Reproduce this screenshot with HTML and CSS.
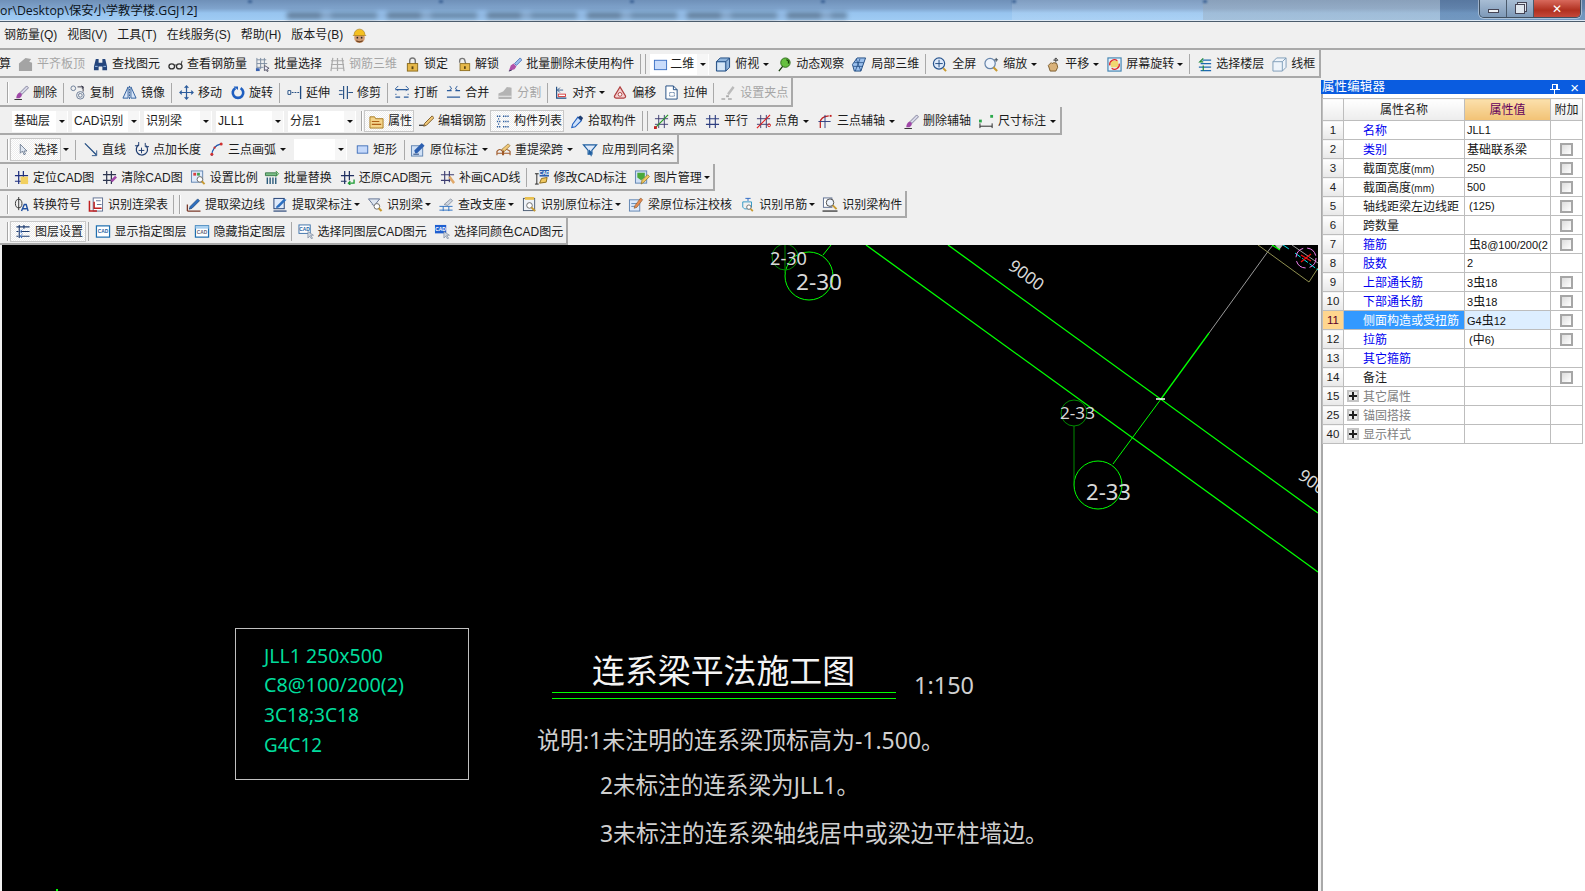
FILE: index.html
```html
<!DOCTYPE html>
<html lang="zh-CN">
<head>
<meta charset="utf-8">
<title>保安小学教学楼.GGJ12</title>
<link rel="stylesheet" href="styles.css">
</head>
<body>
<svg class="defs" aria-hidden="true">
<symbol id="i-lev" viewBox="0 0 16 16"><path d="M1 7l7-6 6 1-2 3 3 1v9H1z" fill="#a4a4a4"/></symbol>
<symbol id="i-find" viewBox="0 0 16 16"><path d="M3 2h3v4h4V2h3l2 8v4h-5v-4H6v4H1v-4z" fill="#24457c"/><path d="M2 10h3M11 10h3" stroke="#9cc0ec"/></symbol>
<symbol id="i-look" viewBox="0 0 16 16"><ellipse cx="4" cy="10" rx="3" ry="2.6" fill="none" stroke="#333" stroke-width="1.4"/><ellipse cx="12" cy="10" rx="3" ry="2.6" fill="none" stroke="#333" stroke-width="1.4"/><path d="M7 9q1-1 2 0M14 8l1-4" stroke="#333" fill="none"/></symbol>
<symbol id="i-batch" viewBox="0 0 16 16"><path d="M2 1v14M6 1v12M10 1v8M2 3h10M2 7h11M2 11h7" stroke="#7c8ca0"/><rect x="1" y="12" width="4" height="3" fill="#3a62b0"/><path d="M10 9l5 3-2 1 1 2-1 .5-1-2-2 1z" fill="#eef" stroke="#556"/></symbol>
<symbol id="i-r3d" viewBox="0 0 16 16"><path d="M1 4h14M1 8h14M1 12h14M3 1l-2 14M8 1v14M13 1l2 14" stroke="#aaa" stroke-width="1.3" fill="none"/></symbol>
<symbol id="i-lock" viewBox="0 0 16 16"><path d="M5 8V4a3 3 0 016 0v4" fill="none" stroke="#777" stroke-width="1.5"/><rect x="2.500" y="7" width="11" height="8" fill="#e6b84a" stroke="#8a6a1c"/><rect x="7" y="10" width="2" height="3" fill="#5a4410"/></symbol>
<symbol id="i-unlock" viewBox="0 0 16 16"><path d="M3 6V4a3 3 0 016 0l1 3" fill="none" stroke="#777" stroke-width="1.5"/><rect x="3.500" y="7" width="11" height="8" fill="#e6b84a" stroke="#8a6a1c"/><rect x="8" y="10" width="2" height="3" fill="#5a4410"/></symbol>
<symbol id="i-brush" viewBox="0 0 16 16"><path d="M1 15.500h8" stroke="#222"/><path d="M7 8l7-7 2 2-7 7z" fill="#d8d8e8" stroke="#6a6a88" stroke-width=".8"/><path d="M3 14c0-3 2-6 4-6l2 2c0 3-3 5-6 4z" fill="#a048a8"/></symbol>
<symbol id="i-delbrush" viewBox="0 0 16 16"><path d="M8 7l6-6 2 2-6 6z" fill="#9cc0ec" stroke="#3a62b0" stroke-width=".8"/><path d="M2 15l2-6 3-2 3 3-2 3z" fill="#b050a8"/><path d="M2 15l3-1" stroke="#335"/></symbol>
<symbol id="i-2d" viewBox="0 0 16 16"><rect x="1.500" y="3.500" width="13" height="10" fill="#c9dcfb" stroke="#3c70c4"/></symbol>
<symbol id="i-top" viewBox="0 0 16 16"><path d="M1 5l4-4h10v10l-4 4H1z" fill="#8fb4dc" stroke="#1e4a80"/><path d="M1 5h10v10M11 5l4-4" fill="none" stroke="#1e4a80"/><rect x="2" y="6" width="8" height="8" fill="#d6e6f6"/></symbol>
<symbol id="i-orbit" viewBox="0 0 16 16"><circle cx="9" cy="6" r="5" fill="#66c040" stroke="#2c6a18"/><path d="M6 10l-4 5M10 3c2 0 3 2 2 4" stroke="#143c08" fill="none" stroke-width="1.4"/></symbol>
<symbol id="i-l3d" viewBox="0 0 16 16"><path d="M1 8l5-7h9l-5 14H3z" fill="#9cc0ec" stroke="#1e4a80"/><path d="M5 2l5 13M9 2l-5 13M3 6h10M2 10h10" stroke="#1e4a80" stroke-width=".8"/></symbol>
<symbol id="i-full" viewBox="0 0 16 16"><circle cx="7.500" cy="7" r="6" fill="#dfeafa" stroke="#28558e" stroke-width="1.3"/><path d="M7.500 3v8M3.500 7h8" stroke="#1e4a80"/><path d="M12 12l3 3" stroke="#c89a30" stroke-width="2"/></symbol>
<symbol id="i-zoom" viewBox="0 0 16 16"><circle cx="6.500" cy="7" r="5.500" fill="#eef4fc" stroke="#6684aa" stroke-width="1.3"/><path d="M10 11l4 4" stroke="#c89a30" stroke-width="2.200"/><path d="M13 1v4M11 3h4" stroke="#345"/></symbol>
<symbol id="i-pan" viewBox="0 0 16 16"><path d="M3 9l3-3 1 1 2-1 3 1 1 4-2 4H5z" fill="#d9b27a" stroke="#7a5a2a"/><path d="M11 1v5M9 3l2-2 2 2M8.500 3.500h5" stroke="#444" fill="none"/></symbol>
<symbol id="i-scr" viewBox="0 0 16 16"><rect x="1" y="1" width="14" height="14" fill="#e8f2fb" stroke="#3c80b0" stroke-width="1.200"/><rect x="4" y="4" width="8" height="7" fill="#f0d870"/><path d="M3 9a5 5 0 018-5M13 7a5 5 0 01-8 5" fill="none" stroke="#e02a2a" stroke-width="1.400"/></symbol>
<symbol id="i-floor" viewBox="0 0 16 16"><path d="M5 3h10M3 7h12M1 11h14M3 15h12" stroke="#1d6ab0" stroke-width="1.600"/><path d="M6 1L2 5h4M6 9v6" stroke="#1f8a3a" stroke-width="1.400" fill="none"/></symbol>
<symbol id="i-wire" viewBox="0 0 16 16"><path d="M1 5l4-4h10v10l-4 4H1zM1 5h10v10M11 5l4-4" fill="#eef4fa" stroke="#7d9cb8"/></symbol>
<symbol id="i-copy" viewBox="0 0 16 16"><circle cx="3.500" cy="3.500" r="2.500" fill="none" stroke="#6a7c96"/><circle cx="11" cy="11" r="4" fill="none" stroke="#6a7c96"/><circle cx="11" cy="11" r="2" fill="none" stroke="#6a7c96"/><path d="M8 2l6 0M14 2v5M12 1l2 1-1 2" stroke="#334" fill="none"/></symbol>
<symbol id="i-mirror" viewBox="0 0 16 16"><path d="M6.500 2v12H1zM9.500 2v12H15z" fill="#d8e6f8" stroke="#2c5c9c"/><path d="M8 1v14" stroke="#2c5c9c" stroke-dasharray="2 1"/></symbol>
<symbol id="i-move" viewBox="0 0 16 16"><path d="M8 1v14M1 8h14M6 3l2-2 2 2M6 13l2 2 2-2M3 6L1 8l2 2M13 6l2 2-2 2" fill="none" stroke="#2c5c9c" stroke-width="1.300"/></symbol>
<symbol id="i-rot" viewBox="0 0 16 16"><path d="M5 3a6 6 0 106 0" fill="none" stroke="#1f5fc0" stroke-width="3"/><path d="M3 1h5v4z" fill="#1f5fc0"/></symbol>
<symbol id="i-ext" viewBox="0 0 16 16"><path d="M14.500 1v14" stroke="#1e4a80" stroke-width="1.400"/><path d="M1 6h3v4H1z" fill="#fff" stroke="#1e4a80"/><path d="M5 8h8" stroke="#1e4a80" stroke-dasharray="2 1"/></symbol>
<symbol id="i-trim" viewBox="0 0 16 16"><path d="M6 1v14M10 1v14" stroke="#1e4a80" stroke-width="1.200"/><path d="M1 6h4M1 10h4M11 8h5" stroke="#1e4a80"/></symbol>
<symbol id="i-brk" viewBox="0 0 16 16"><path d="M1 5h14M1 13h5M10 13h5M1 10h1M14 10h1" stroke="#2c5c9c" stroke-width="1.300"/><path d="M4 1L1 4l3 2M12 1l3 3-3 2" fill="none" stroke="#2c5c9c"/></symbol>
<symbol id="i-merge" viewBox="0 0 16 16"><path d="M1 6h5M10 6h5M1 13h14" stroke="#2c5c9c" stroke-width="1.300"/><path d="M4 1l2 3-2 1M12 1l-2 3 2 1" fill="none" stroke="#2c5c9c"/></symbol>
<symbol id="i-split" viewBox="0 0 16 16"><path d="M1 15V9l5-2 4-5 5 1v12z" fill="#b4b4b4"/><path d="M1 12h14" stroke="#eee"/></symbol>
<symbol id="i-align" viewBox="0 0 16 16"><path d="M2 1v14h12" fill="none" stroke="#1e4a80" stroke-width="1.400"/><rect x="4" y="10" width="9" height="3" fill="#fff" stroke="#d02020"/><path d="M6 2l-3 3 3 3M3 5h7" fill="none" stroke="#1e4a80"/></symbol>
<symbol id="i-off" viewBox="0 0 16 16"><path d="M8 2l6 10q0 2-2 2H4q-2 0-2-2z" fill="#f4d0d0" stroke="#b04040" stroke-width="1.300"/><circle cx="8" cy="10" r="2" fill="#fff" stroke="#b04040"/></symbol>
<symbol id="i-str" viewBox="0 0 16 16"><path d="M2 1h8l4 4v10H2z" fill="#fff" stroke="#1e4a80"/><path d="M10 1v4h4" fill="none" stroke="#1e4a80"/><path d="M6 8h5v4H6z" fill="none" stroke="#1e4a80" stroke-dasharray="1 1"/></symbol>
<symbol id="i-grip" viewBox="0 0 16 16"><path d="M7 9l6-8 2 2-6 8z" fill="#bbb"/><path d="M1 15h4M8 15h4" stroke="#aaa" stroke-width="1.500"/><rect x="6" y="11" width="3" height="2" fill="#aaa"/></symbol>
<symbol id="i-attr" viewBox="0 0 16 16"><path d="M1 3h5l1 2h8v10H1z" fill="#f4d48a" stroke="#a87a20"/><path d="M3 8h8M3 11h10" stroke="#b06018" stroke-width="1.200"/></symbol>
<symbol id="i-edit" viewBox="0 0 16 16"><path d="M0 12h7" stroke="#222" stroke-width="1.200"/><path d="M6 10l8-8 2 2-8 8-3 1z" fill="#f0c878" stroke="#7a5a2a"/></symbol>
<symbol id="i-list" viewBox="0 0 16 16"><path d="M1 2h4M1 8h4M1 14h4M8 2h7M8 8h7M8 14h7" stroke="#2c5c9c" stroke-width="1.500" stroke-dasharray="1.500 1"/><path d="M3 4v2M3 10v2" stroke="#2c5c9c"/></symbol>
<symbol id="i-pick" viewBox="0 0 16 16"><path d="M9 3l4 4-7 7-4 1 1-4z" fill="#cfe2fa" stroke="#1f5fc0" stroke-width="1.200"/><path d="M9 3l3-2 3 3-2 3z" fill="#1e3c70"/></symbol>
<symbol id="i-2pt" viewBox="0 0 16 16"><path d="M5 1v14M11 1v14M1 5h14M1 11h14" stroke="#3c3c70"/><path d="M1 15L15 1" stroke="#2a9a2a" stroke-width="1.300"/><rect x="0" y="13" width="3" height="3" fill="#c02020"/></symbol>
<symbol id="i-par" viewBox="0 0 16 16"><path d="M5 1v14M11 1v14M1 5h14M1 11h14" stroke="#2e3e80" stroke-width="1.200"/></symbol>
<symbol id="i-ang" viewBox="0 0 16 16"><path d="M5 1v14M11 1v14M1 5h14M1 11h14" stroke="#3c3c70"/><path d="M1 15L15 1" stroke="#e02020" stroke-width="1.300"/><circle cx="14" cy="12" r="1.500" fill="none" stroke="#e02020"/></symbol>
<symbol id="i-3ax" viewBox="0 0 16 16"><path d="M3 15V9q0-6 9-7" fill="none" stroke="#c02020" stroke-width="1.300"/><path d="M8 1v14M1 8h13" stroke="#2e3e80"/><rect x="13" y="1" width="2" height="2" fill="#c02020"/></symbol>
<symbol id="i-dim" viewBox="0 0 16 16"><path d="M1 10v5M14 10v5M1 13h13" stroke="#222"/><rect x="0" y="6" width="3" height="3" fill="#2aa84a"/><rect x="12" y="1" width="3" height="3" fill="#2aa84a"/></symbol>
<symbol id="i-sel" viewBox="0 0 16 16"><path d="M3 1v12l3-3 2 5 2-1-2-4h4z" fill="#dfe7f2" stroke="#5a6a80"/></symbol>
<symbol id="i-line" viewBox="0 0 16 16"><path d="M1 1l13 13" stroke="#1e4a80" stroke-width="1.400"/><path d="M14.500 9v6H9" fill="none" stroke="#1e4a80"/></symbol>
<symbol id="i-ptl" viewBox="0 0 16 16"><path d="M5 3a6 6 0 108 1" fill="none" stroke="#1e3c70" stroke-width="1.300"/><path d="M8 6v6M5 9h6" stroke="#1e3c70"/><path d="M5 0v4H1M12 1v4h4" fill="none" stroke="#1e3c70"/></symbol>
<symbol id="i-arc" viewBox="0 0 16 16"><path d="M3 15Q3 4 13 2" fill="none" stroke="#1e5ab0" stroke-width="1.300"/><circle cx="3" cy="13" r="1.600" fill="#d03030"/><circle cx="13" cy="2" r="1.600" fill="#d03030"/><circle cx="6" cy="6" r="1.200" fill="#d03030"/></symbol>
<symbol id="i-rect" viewBox="0 0 16 16"><rect x="1.500" y="3.500" width="13" height="9" fill="#c4d8fa" stroke="#2c5fb0"/></symbol>
<symbol id="i-org" viewBox="0 0 16 16"><rect x="1" y="4" width="12" height="11" fill="#cfe0f6" stroke="#5f83b0"/><path d="M5 12l-1-3 8-8 3 3-8 8z" fill="#2c5fb0"/><path d="M3 13h6" stroke="#1e3c70"/></symbol>
<symbol id="i-resp" viewBox="0 0 16 16"><path d="M1 14v-4q3-4 6 0v4M8 14v-4q3-4 7 0v4M1 12h14" fill="none" stroke="#a05a2a" stroke-width="1.200"/><path d="M6 8l7-6 2 2-6 6z" fill="#f0c878" stroke="#8a6a2a" stroke-width=".7"/></symbol>
<symbol id="i-app" viewBox="0 0 16 16"><path d="M1 3h14l-5 6v4H6V9z" fill="#dfeafa" stroke="#1f5fa0" stroke-width="1.300"/><path d="M7 8l4 4-2 0 1 3-1 .5-1-3-1.500 1z" fill="#1f5fa0"/></symbol>
<symbol id="i-loc" viewBox="0 0 16 16"><path d="M5 1v14M10 1v14M1 6h14M1 12h14" stroke="#1f2f80" stroke-width="1.300"/><rect x="7" y="7" width="8" height="8" fill="#f2d060"/></symbol>
<symbol id="i-clr" viewBox="0 0 16 16"><path d="M5 1v14M10 1v14M1 5h14M1 11h9" stroke="#2e3650" stroke-width="1.300"/><path d="M9 11l5-5 2 2-5 5z" fill="#a048a8"/></symbol>
<symbol id="i-scale" viewBox="0 0 16 16"><rect x="1" y="1" width="12" height="12" fill="#dfeafa" stroke="#5f83b0"/><rect x="3" y="3" width="3" height="3" fill="#d84040"/><rect x="7" y="3" width="3" height="3" fill="#40a050"/><circle cx="10" cy="10" r="3" fill="#fff" stroke="#666"/><path d="M12 12l3 3" stroke="#c89a30" stroke-width="2"/></symbol>
<symbol id="i-repl" viewBox="0 0 16 16"><path d="M1 3h12v3H1z" fill="#7cc088" stroke="#3a7a4a"/><path d="M3 8v7M6 8v7M9 8v7M12 8v7" stroke="#2c5c7c" stroke-width="1.500"/><path d="M12 1l3 3-3 3" fill="none" stroke="#2a9a2a"/></symbol>
<symbol id="i-rest" viewBox="0 0 16 16"><path d="M5 1v14M10 1v10M1 6h14M1 12h6" stroke="#1f2f60" stroke-width="1.300"/><path d="M15 10v4H9M11 12l-2 2 2 2" fill="none" stroke="#1a9a30" stroke-width="1.400"/></symbol>
<symbol id="i-patch" viewBox="0 0 16 16"><path d="M5 1v14M10 1v12M1 5h14M1 11h10" stroke="#3c3c70" stroke-width="1.200"/><path d="M9 8l2-2 5 7-2 2z" fill="#e0a868"/></symbol>
<symbol id="i-pic" viewBox="0 0 16 16"><rect x="1" y="1" width="12" height="13" fill="#cfe0f6" stroke="#5f83b0"/><path d="M3 3h8v5l-4 3-4-3z" fill="#4aa83a"/><path d="M7 15l1-4 6-6 2 2-6 6z" fill="#f0c860" stroke="#8a6a1c" stroke-width=".7"/></symbol>
<symbol id="i-conv" viewBox="0 0 16 16"><ellipse cx="5" cy="7" rx="3.500" ry="4.500" fill="none" stroke="#333"/><path d="M5 0v14" stroke="#333"/><path d="M8 15l3-7h2l2 7M9.500 12.500h4" fill="none" stroke="#1f4fa0" stroke-width="1.500"/></symbol>
<symbol id="i-ctab" viewBox="0 0 16 16"><rect x="5" y="1" width="10" height="14" fill="#fff" stroke="#5f6f90"/><path d="M1 4v11h8M6 5v7h8" fill="none" stroke="#c02020" stroke-width="1.600"/><path d="M8 4h5M9 8h5" stroke="#5f6f90"/></symbol>
<symbol id="i-xedge" viewBox="0 0 16 16"><path d="M2 15V8M2 15h14" stroke="#7a3a2a" stroke-width="1.400"/><path d="M5 10l8-8 2 2-8 8-3 1z" fill="#2c6fc0" stroke="#143c70" stroke-width=".7"/></symbol>
<symbol id="i-xmark" viewBox="0 0 16 16"><rect x="1.500" y="1.500" width="11" height="11" fill="#dfeafa" stroke="#1e3c70"/><path d="M1 15h14" stroke="#1e3c70" stroke-width="1.200"/><path d="M4 10l8-8 3 1-8 8-3 1z" fill="#2c6fc0"/></symbol>
<symbol id="i-rec" viewBox="0 0 16 16"><path d="M1 2h12l-4 5v3L5 8V7z" fill="#dfe6f0" stroke="#5f6f90"/><circle cx="10" cy="10" r="3" fill="#fff" stroke="#666"/><path d="M12 12l3 3" stroke="#c89a30" stroke-width="2.200"/></symbol>
<symbol id="i-sup" viewBox="0 0 16 16"><path d="M1 10h14M1 14h14M5 10v5M11 10v5" stroke="#2c6fc0"/><path d="M6 8l7-6 2 2-5 5z" fill="#cfd6e0" stroke="#8a94a4"/></symbol>
<symbol id="i-orig" viewBox="0 0 16 16"><rect x="1.500" y="1.500" width="12" height="13" fill="#eef2f8" stroke="#4a5a70"/><rect x="3" y="0" width="10" height="3" fill="#e8c050"/><circle cx="8" cy="9" r="3" fill="#fff" stroke="#666"/><path d="M10 11l4 4" stroke="#c89a30" stroke-width="2"/></symbol>
<symbol id="i-chk" viewBox="0 0 16 16"><rect x="1" y="3" width="11" height="12" fill="#dfeafa" stroke="#5f83b0"/><path d="M3 7h6M3 10h5" stroke="#5f83b0"/><path d="M6 12l1-3 6-8 2 2-6 8z" fill="#e88a50" stroke="#8a5a2a" stroke-width=".7"/></symbol>
<symbol id="i-hang" viewBox="0 0 16 16"><path d="M5 1h6M8 1v3" stroke="#1f5fc0"/><path d="M2 5h10v6l-2 2H4l-2-2z" fill="none" stroke="#1f8fc0"/><circle cx="9" cy="11" r="2.500" fill="#fff" stroke="#666"/><path d="M11 13l2.500 2.500" stroke="#c89a30" stroke-width="2"/></symbol>
<symbol id="i-bcomp" viewBox="0 0 16 16"><rect x="1" y="1" width="9" height="10" fill="#fff" stroke="#5f6f90"/><circle cx="8" cy="6" r="4" fill="#eef4fc" stroke="#444"/><path d="M11 9l4 4" stroke="#c89a30" stroke-width="2"/><path d="M0 15h16" stroke="#444" stroke-width="1.500"/></symbol>
<symbol id="i-layer" viewBox="0 0 16 16"><path d="M1 3h14M6 8h9M6 13h9M1 8h2M1 13h2M4 1v14M9 1v4" stroke="#1e3c70" stroke-width="1.200"/><path d="M7 6L5 8l2 2M7 11l-2 2 2 2" fill="none" stroke="#1f5fc0"/></symbol>
<symbol id="i-hat" viewBox="0 0 16 16"><circle cx="8" cy="10" r="5" fill="#d09a70"/><circle cx="6" cy="10" r=".8" fill="#222"/><circle cx="10" cy="10" r=".8" fill="#222"/><path d="M3 7a5 5 0 0110 0l1 1H2z" fill="#f4c020" stroke="#a87a10" stroke-width=".6"/><path d="M5 13q3 2 6 0" stroke="#6a4020" fill="none"/></symbol>
</svg>

<header class="titlebar">
  <span class="doc">or\Desktop\保安小学教学楼.GGJ12]</span>
  <div class="winbtns">
    <span class="wb"><i class="wmin"></i></span>
    <span class="wb"><i class="wmax"></i></span>
    <span class="wb wclose">✕</span>
  </div>
</header>

<nav class="menu">
  <span>钢筋量(Q)</span><span>视图(V)</span><span>工具(T)</span><span>在线服务(S)</span><span>帮助(H)</span><span>版本号(B)</span>
  <svg class="hat"><use href="#i-hat"/></svg>
</nav>

<div class="work">
<div class="left">
  <div class="tb r1">
    <span class="t first">算</span>
    <span class="t off s1"><svg class="ic"><use href="#i-lev"/></svg>平齐板顶</span>
    <span class="t"><svg class="ic"><use href="#i-find"/></svg>查找图元</span>
    <span class="t"><svg class="ic"><use href="#i-look"/></svg>查看钢筋量</span>
    <span class="t"><svg class="ic"><use href="#i-batch"/></svg>批量选择</span>
    <span class="t off"><svg class="ic"><use href="#i-r3d"/></svg>钢筋三维</span>
    <span class="t"><svg class="ic"><use href="#i-lock"/></svg>锁定</span>
    <span class="t a1"><svg class="ic w14"><use href="#i-unlock"/></svg>解锁</span>
    <span class="t"><svg class="ic"><use href="#i-delbrush"/></svg>批量删除未使用构件</span>
    <i class="grip2"></i>
    <span class="pick"><svg class="ic w15m"><use href="#i-2d"/></svg>二维<b class="ddcell"><i class="dd0"></i></b></span>
    <span class="t s2"><svg class="ic w16"><use href="#i-top"/></svg>俯视<i class="dd"></i></span>
    <span class="t"><svg class="ic"><use href="#i-orbit"/></svg>动态观察</span>
    <span class="t s1"><svg class="ic w16"><use href="#i-l3d"/></svg>局部三维</span>
    <i class="sep"></i>
    <span class="t"><svg class="ic w17"><use href="#i-full"/></svg>全屏</span>
    <span class="t"><svg class="ic"><use href="#i-zoom"/></svg>缩放<i class="dd"></i></span>
    <span class="t"><svg class="ic w16"><use href="#i-pan"/></svg>平移<i class="dd"></i></span>
    <span class="t"><svg class="ic"><use href="#i-scr"/></svg>屏幕旋转<i class="dd d4"></i></span>
    <i class="sep"></i>
    <span class="t a3"><svg class="ic w14"><use href="#i-floor"/></svg>选择楼层</span>
    <span class="t"><svg class="ic"><use href="#i-wire"/></svg>线框</span>
  </div>

  <div class="tb r2">
    <i class="grip g13"></i>
    <span class="t"><svg class="ic w16"><use href="#i-brush"/></svg>删除</span>
    <i class="sep"></i>
    <span class="t"><svg class="ic w17"><use href="#i-copy"/></svg>复制</span>
    <span class="t"><svg class="ic"><use href="#i-mirror"/></svg>镜像</span>
    <i class="sep"></i>
    <span class="t a2"><svg class="ic"><use href="#i-move"/></svg>移动</span>
    <span class="t a1"><svg class="ic w14"><use href="#i-rot"/></svg>旋转</span>
    <i class="sep"></i>
    <span class="t a2"><svg class="ic"><use href="#i-ext"/></svg>延伸</span>
    <span class="t"><svg class="ic"><use href="#i-trim"/></svg>修剪</span>
    <i class="sep"></i>
    <span class="t a1"><svg class="ic w16"><use href="#i-brk"/></svg>打断</span>
    <span class="t"><svg class="ic"><use href="#i-merge"/></svg>合并</span>
    <span class="t off"><svg class="ic w16"><use href="#i-split"/></svg>分割</span>
    <i class="sep"></i>
    <span class="t a2"><svg class="ic w13"><use href="#i-align"/></svg>对齐<i class="dd d4"></i></span>
    <span class="t s1"><svg class="ic w16"><use href="#i-off"/></svg>偏移</span>
    <span class="t"><svg class="ic"><use href="#i-str"/></svg>拉伸</span>
    <i class="sep"></i>
    <span class="t off a1"><svg class="ic w16"><use href="#i-grip"/></svg>设置夹点</span>
  </div>

  <div class="tb r3">
    <div class="combos">
      <span class="combo c-first">基础层<b class="ddcell"><i class="dd0"></i></b></span>
      <span class="combo">CAD识别<b class="ddcell"><i class="dd0"></i></b></span>
      <span class="combo">识别梁<b class="ddcell"><i class="dd0"></i></b></span>
      <span class="combo">JLL1<b class="ddcell"><i class="dd0"></i></b></span>
      <span class="combo">分层1<b class="ddcell"><i class="dd0"></i></b></span>
    </div>
    <i class="grip g-tight"></i>
    <span class="t btn b-attr"><svg class="ic"><use href="#i-attr"/></svg>属性</span>
    <span class="t s3"><svg class="ic"><use href="#i-edit"/></svg>编辑钢筋</span>
    <span class="t btn b-list s4"><svg class="ic w14"><use href="#i-list"/></svg>构件列表</span>
    <span class="t s2"><svg class="ic w14"><use href="#i-pick"/></svg>拾取构件</span>
    <i class="grip2"></i>
    <span class="t a2"><svg class="ic"><use href="#i-2pt"/></svg>两点</span>
    <span class="t"><svg class="ic"><use href="#i-par"/></svg>平行</span>
    <span class="t"><svg class="ic"><use href="#i-ang"/></svg>点角<i class="dd"></i></span>
    <span class="t"><svg class="ic w16"><use href="#i-3ax"/></svg>三点辅轴<i class="dd"></i></span>
    <span class="t"><svg class="ic w16"><use href="#i-brush"/></svg>删除辅轴</span>
    <span class="t"><svg class="ic"><use href="#i-dim"/></svg>尺寸标注<i class="dd"></i></span>
  </div>

  <div class="tb r4">
    <i class="grip g-tight2"></i>
    <span class="t btn b-sel"><svg class="ic w12"><use href="#i-sel"/></svg>选择</span>
    <i class="dd dx"></i>
    <i class="sep"></i>
    <span class="t a3"><svg class="ic w14"><use href="#i-line"/></svg>直线</span>
    <span class="t"><svg class="ic"><use href="#i-ptl"/></svg>点加长度</span>
    <span class="t"><svg class="ic"><use href="#i-arc"/></svg>三点画弧<i class="dd"></i></span>
    <span class="combo c-blank"><b class="ddcell"><i class="dd0"></i></b></span>
    <span class="t a1"><svg class="ic w13"><use href="#i-rect"/></svg>矩形</span>
    <i class="sep a1"></i>
    <span class="t"><svg class="ic w16"><use href="#i-org"/></svg>原位标注<i class="dd"></i></span>
    <span class="t"><svg class="ic"><use href="#i-resp"/></svg>重提梁跨<i class="dd"></i></span>
    <span class="t a1"><svg class="ic w16"><use href="#i-app"/></svg>应用到同名梁</span>
  </div>

  <div class="tb r5">
    <i class="grip g14"></i>
    <span class="t"><svg class="ic"><use href="#i-loc"/></svg>定位CAD图</span>
    <span class="t"><svg class="ic"><use href="#i-clr"/></svg>清除CAD图</span>
    <span class="t s1"><svg class="ic w16"><use href="#i-scale"/></svg>设置比例</span>
    <span class="t s2"><svg class="ic w16"><use href="#i-repl"/></svg>批量替换</span>
    <span class="t"><svg class="ic"><use href="#i-rest"/></svg>还原CAD图元</span>
    <span class="t"><svg class="ic"><use href="#i-patch"/></svg>补画CAD线</span>
    <i class="sep"></i>
    <span class="t a2"><svg class="ic" viewBox="0 0 16 16"><rect x="6" y="0" width="10" height="7" fill="#2c5fb0"/><text x="11" y="5.500" class="ict wt">CAD</text><path d="M1 4h4M3 4v11M1 15h4" stroke="#222"/><path d="M6 14l2-5 6-1-1 5z" fill="#f0c860" stroke="#8a6a1c"/></svg>修改CAD标注</span>
    <span class="t s1"><svg class="ic w16"><use href="#i-pic"/></svg>图片管理<i class="dd d3"></i></span>
  </div>

  <div class="tb r6">
    <i class="grip g14"></i>
    <span class="t"><svg class="ic"><use href="#i-conv"/></svg>转换符号</span>
    <span class="t s1"><svg class="ic w16"><use href="#i-ctab"/></svg>识别连梁表</span>
    <i class="sep s1"></i>
    <i class="grip g-next"></i>
    <span class="t"><svg class="ic w16"><use href="#i-xedge"/></svg>提取梁边线</span>
    <span class="t s1"><svg class="ic w16"><use href="#i-xmark"/></svg>提取梁标注<i class="dd d3"></i></span>
    <span class="t s1"><svg class="ic w16"><use href="#i-rec"/></svg>识别梁<i class="dd d3"></i></span>
    <span class="t s1"><svg class="ic w16"><use href="#i-sup"/></svg>查改支座<i class="dd d3"></i></span>
    <span class="t"><svg class="ic"><use href="#i-orig"/></svg>识别原位标注<i class="dd d3"></i></span>
    <span class="t s1"><svg class="ic w16"><use href="#i-chk"/></svg>梁原位标注校核</span>
    <span class="t a1"><svg class="ic w14"><use href="#i-hang"/></svg>识别吊筋<i class="dd d3"></i></span>
    <span class="t s1"><svg class="ic w16"><use href="#i-bcomp"/></svg>识别梁构件</span>
  </div>

  <div class="tb r7">
    <i class="grip g-tight2"></i>
    <span class="t btn b-lay"><svg class="ic w16"><use href="#i-layer"/></svg>图层设置</span>
    <i class="sep near"></i>
    <span class="t"><svg class="ic w16" viewBox="0 0 16 16"><rect x="1" y="2" width="14" height="12" fill="#fff" stroke="#1f6fb0" stroke-width="1.300"/><text x="8" y="10" class="ict bl">CAD</text></svg>显示指定图层</span>
    <span class="t s1"><svg class="ic w16" viewBox="0 0 16 16"><rect x="1" y="2" width="14" height="12" fill="#fff" stroke="#1f6fb0" stroke-width="1.300"/><rect x="1" y="2" width="14" height="3" fill="#a8d0f0"/><text x="8" y="11" class="ict gy">CAD</text></svg>隐藏指定图层</span>
    <i class="sep"></i>
    <span class="t"><svg class="ic w16" viewBox="0 0 16 16"><rect x="0.500" y="1" width="12" height="9" fill="#fff" stroke="#3a70a8"/><text x="6.500" y="7.500" class="ict bl">CAD</text><path d="M10 8v7l2-2 2 3 1-1-2-3h3z" fill="#cfd6e0" stroke="#6a7a90" stroke-width=".6"/></svg>选择同图层CAD图元</span>
    <span class="t s1"><svg class="ic w16" viewBox="0 0 16 16"><rect x="0.500" y="1" width="12" height="9" fill="#1f5fd0"/><text x="6.500" y="7.500" class="ict wt">CAD</text><path d="M10 8v7l2-2 2 3 1-1-2-3h3z" fill="#cfd6e0" stroke="#6a7a90" stroke-width=".6"/></svg>选择同颜色CAD图元</span>
  </div>

  <main class="canvas">
    <svg class="draw" viewBox="2 245 1316 646" width="1316" height="646">
      <g class="gr">
        <line x1="866" y1="245" x2="1318" y2="572"/>
        <line x1="948" y1="245" x2="1318" y2="513"/>
        <line x1="1209" y1="333" x2="1161" y2="399"/>
      </g>
      <g class="gr-thin">
        <line x1="1161" y1="399" x2="1113" y2="464"/>
        <circle cx="1098" cy="485" r="24"/>
        <circle cx="809" cy="276" r="24"/>
        <line x1="823" y1="255" x2="831" y2="245"/>
      </g>
      <g class="gr-dark">
        <circle cx="1074" cy="413" r="13"/>
        <circle cx="785" cy="257" r="13"/>
        <line x1="1074" y1="426" x2="1074" y2="485"/>
        <line x1="785" y1="245" x2="785" y2="273"/>
      </g>
      <line class="gy-line" x1="1209" y1="333" x2="1269" y2="250"/>
      <line class="gy-line" x1="1269" y1="250" x2="1273" y2="245"/>
      <line class="cross" x1="1156" y1="399" x2="1165" y2="399"/>
      <polyline class="khaki" points="1258,245 1309,282 1318,268"/>
      <line class="gy-line" x1="1292" y1="245" x2="1318" y2="263"/>
      <line class="cyan" x1="1295" y1="253" x2="1318" y2="270"/>
      <line class="cyan" x1="1283" y1="245" x2="1289" y2="249"/>
      <circle class="mag" cx="1306" cy="258" r="10"/>
      <path class="red" d="M1301 255l10 6M1311 254l-10 8"/>
      <path class="gtri" d="M1275 245h8l-4 5z"/>
      <line class="gr-short" x1="1272" y1="245" x2="1280" y2="250"/>
      <rect class="gdot" x="56" y="889" width="2" height="2"/>

      <text class="lbl" x="796" y="290" font-size="22" textLength="46" lengthAdjust="spacingAndGlyphs">2-30</text>
      <text class="lbl" x="770" y="265" font-size="18" textLength="37" lengthAdjust="spacingAndGlyphs">2-30</text>
      <text class="lbl" x="1086" y="500" font-size="22" textLength="45" lengthAdjust="spacingAndGlyphs">2-33</text>
      <text class="lbl" x="1060" y="419" font-size="17" textLength="35" lengthAdjust="spacingAndGlyphs">2-33</text>
      <text class="lbl" font-size="17" text-anchor="middle" transform="translate(1023 280) rotate(36)">9000</text>
      <text class="lbl" font-size="17" transform="translate(1297 478) rotate(36)">9000</text>

      <rect class="legend" x="235.500" y="628.500" width="233" height="151"/>
      <text class="tag" x="264" y="663" font-size="19" textLength="119" lengthAdjust="spacingAndGlyphs">JLL1 250x500</text>
      <text class="tag" x="264" y="692" font-size="19" textLength="140" lengthAdjust="spacingAndGlyphs">C8@100/200(2)</text>
      <text class="tag" x="264" y="722" font-size="19" textLength="95" lengthAdjust="spacingAndGlyphs">3C18;3C18</text>
      <text class="tag" x="264" y="752" font-size="19" textLength="58" lengthAdjust="spacingAndGlyphs">G4C12</text>

      <text class="head" x="592" y="683" font-size="33" textLength="263" lengthAdjust="spacingAndGlyphs">连系梁平法施工图</text>
      <line class="gr1" x1="552" y1="692.500" x2="896" y2="692.500"/>
      <line class="gr1" x1="552" y1="698.500" x2="896" y2="698.500"/>
      <text class="note" x="914" y="694" font-size="24" textLength="60" lengthAdjust="spacingAndGlyphs">1:150</text>
      <text class="note" x="537" y="749" font-size="23.500" textLength="407" lengthAdjust="spacingAndGlyphs">说明:1未注明的连系梁顶标高为-1.500。</text>
      <text class="note" x="600" y="794" font-size="23.500" textLength="259" lengthAdjust="spacingAndGlyphs">2未标注的连系梁为JLL1。</text>
      <text class="note" x="600" y="842" font-size="23.500" textLength="448" lengthAdjust="spacingAndGlyphs">3未标注的连系梁轴线居中或梁边平柱墙边。</text>
    </svg>
  </main>
</div>

<aside class="panel">
  <div class="phead"><span class="ptitle">属性编辑器</span><span class="pctl"><i class="pin"></i><span class="px">×</span></span></div>
  <table class="props">
    <colgroup><col class="c1"><col class="c2"><col class="c3"><col class="c4"></colgroup>
    <thead>
      <tr><th class="n"></th><th>属性名称</th><th class="hv">属性值</th><th>附加</th></tr>
    </thead>
    <tbody>
      <tr><td class="n">1</td><td class="k l">名称</td><td class="v">JLL1</td><td></td></tr>
      <tr><td class="n">2</td><td class="k l">类别</td><td class="v cj">基础联系梁</td><td class="x"><i class="cb"></i></td></tr>
      <tr><td class="n">3</td><td class="k">截面宽度<small>(mm)</small></td><td class="v">250</td><td class="x"><i class="cb"></i></td></tr>
      <tr><td class="n">4</td><td class="k">截面高度<small>(mm)</small></td><td class="v">500</td><td class="x"><i class="cb"></i></td></tr>
      <tr><td class="n">5</td><td class="k">轴线距梁左边线距</td><td class="v ind">(125)</td><td class="x"><i class="cb"></i></td></tr>
      <tr><td class="n">6</td><td class="k">跨数量</td><td class="v"></td><td class="x"><i class="cb"></i></td></tr>
      <tr><td class="n">7</td><td class="k l">箍筋</td><td class="v ind"><span class="cjs">虫</span>8@100/200(2</td><td class="x"><i class="cb"></i></td></tr>
      <tr><td class="n">8</td><td class="k l">肢数</td><td class="v">2</td><td></td></tr>
      <tr><td class="n">9</td><td class="k l">上部通长筋</td><td class="v">3<span class="cjs">虫</span>18</td><td class="x"><i class="cb"></i></td></tr>
      <tr><td class="n">10</td><td class="k l">下部通长筋</td><td class="v">3<span class="cjs">虫</span>18</td><td class="x"><i class="cb"></i></td></tr>
      <tr class="cur"><td class="n">11</td><td class="k">侧面构造或受扭筋</td><td class="v">G4<span class="cjs">虫</span>12</td><td class="x"><i class="cb"></i></td></tr>
      <tr><td class="n">12</td><td class="k l">拉筋</td><td class="v ind">(<span class="cjs">中</span>6)</td><td class="x"><i class="cb"></i></td></tr>
      <tr><td class="n">13</td><td class="k l">其它箍筋</td><td class="v"></td><td></td></tr>
      <tr><td class="n">14</td><td class="k">备注</td><td class="v"></td><td class="x"><i class="cb"></i></td></tr>
      <tr><td class="n">15</td><td class="k g"><i class="exp"></i>其它属性</td><td></td><td></td></tr>
      <tr><td class="n">25</td><td class="k g"><i class="exp"></i>锚固搭接</td><td></td><td></td></tr>
      <tr><td class="n">40</td><td class="k g"><i class="exp"></i>显示样式</td><td></td><td></td></tr>
    </tbody>
  </table>
</aside>
</div>
</body>
</html>
```
FILE: styles.css
```css
* { box-sizing: border-box; }
html, body { margin: 0; padding: 0; }
body {
  width: 1585px; height: 891px; overflow: hidden;
  display: flex; flex-direction: column;
  background: #f0f0f0; color: #1c1c1c;
  font: 12px/1 "Liberation Sans", "Noto Sans CJK SC", sans-serif;
}
.defs { position: absolute; width: 0; height: 0; }
.ict { font: 700 5.200px "Liberation Sans", sans-serif; text-anchor: middle; }
.wt { fill: #fff; } .bl { fill: #1f5f9f; } .gy { fill: #667; }

/* title bar */
.titlebar {
  position: relative; height: 22px; flex: none; overflow: hidden;
  display: flex; align-items: flex-start;
  border-bottom: 1px solid #4c5c6c;
  box-shadow: inset 0 -1px 0 #dfeaf5;
  background:
    linear-gradient(90deg, transparent 1012px, rgba(255,255,255,.12) 1012px 1203px, rgba(170,180,190,.45) 1203px 1440px, rgba(60,90,130,.45) 1440px),
    linear-gradient(180deg, #6f90b8 0, #7fa3cc 40%, #97c4ef 62%, #a0ccf4 100%);
}
.titlebar::before {
  content: ""; position: absolute; left: 287px; top: 12px; width: 560px; height: 7px;
  background: repeating-linear-gradient(90deg, #4c6078 0 34px, #7a94b4 34px 44px, #56708c 44px 90px, #8cb0da 90px 100px);
  filter: blur(2.500px); opacity: .7;
}
.titlebar::after {
  content: ""; position: absolute; left: 248px; top: 0; width: 960px; height: 3px;
  background: repeating-linear-gradient(90deg, #3f6698 0 4px, transparent 4px 191px);
  filter: blur(1px);
}
.doc { position: relative; padding-top: 4px; font: 12.300px/14px "Open Sans", "Noto Sans CJK SC", sans-serif; color: #0c1420; white-space: nowrap; }
.winbtns {
  position: relative; margin-left: auto; margin-right: 4px; display: flex; height: 18px; width: 102px;
  border: 1px solid #3f4f60; border-top: 0; border-radius: 0 0 5px 5px; overflow: hidden;
  box-shadow: 0 0 0 1px rgba(255,255,255,.4);
}
.wb { width: 27px; display: flex; align-items: center; justify-content: center; background: linear-gradient(#a8bdd4, #7d99b8); border-right: 1px solid #4a5a6c; }
.wclose { flex: 1; border: 0; background: linear-gradient(#d8695c, #b0301f 60%, #c4483a); color: #fff; font: 700 12px/1 "DejaVu Sans", sans-serif; }
.wmin { width: 11px; height: 4px; margin-top: 5px; background: #eef2f6; border: 1px solid #445; }
.wmax { width: 10px; height: 10px; background: #dfe6ee; border: 1px solid #445; box-shadow: 2px -2px 0 -1px #dfe6ee, 2px -2px 0 0 #445; }

/* menu */
.menu {
  height: 28px; flex: none; display: flex; align-items: center; gap: 10px;
  padding-left: 4px; border-bottom: 2px solid #a9a9a9; background: #f0f0f0;
}
.hat { width: 17px; height: 17px; margin-left: -2px; }

/* layout */
.work { flex: 1; display: flex; min-height: 0; }
.left { width: 1321px; flex: none; display: flex; flex-direction: column; }

/* toolbars */
.tb {
  display: flex; align-items: center; gap: 8px; width: fit-content; flex: none;
  border-right: 2px solid #a9a9a9; border-bottom: 2px solid #a9a9a9;
  white-space: nowrap; padding-right: 3px; padding-top: 2px;
}
.r1 { height: 28px; width: 1321px; padding-right: 0; }
.r2 { height: 29px; padding-left: 7px; }
.r3 { height: 28px; padding-left: 12px; padding-right: 4px; }
.r4 { height: 29px; padding-left: 7px; }
.r5 { height: 27px; padding-left: 7px; }
.r6 { height: 27px; padding-left: 7px; }
.r7 { height: 27px; padding-left: 7px; }

.t { display: inline-flex; align-items: center; flex: none; height: 100%; }
.first { margin-left: -1px; }
.off { color: #a6a6a6; }
.ic { width: 15px; height: 15px; margin-right: 4px; flex: none; }
.w12 { width: 12px; } .w13 { width: 13px; } .w14 { width: 14px; }
.w16 { width: 16px; } .w17 { width: 17px; }
.w15m { margin-right: 2px; }
.a1 { margin-left: 1px; } .a2 { margin-left: 2px; } .a3 { margin-left: 3px; }
.s1 { margin-left: -1px; } .s2 { margin-left: -2px; } .s3 { margin-left: -3px; } .s4 { margin-left: -4px; }

.sep { width: 1px; height: 80%; background: #a9a9a9; margin: 0 -2.500px; flex: none; }
.sep.s1 { margin-left: -3.500px; }
.sep.a1 { margin-left: -1.500px; }
.sep.near { margin-left: -6px; }

.grip { width: 2px; height: 82%; flex: none; background: #a6a6a6; border-right: 1px solid #fff; }
.g13 { margin-right: -4px; }
.g14 { margin-right: -3px; }
.g-tight { margin: 0 -7px 0 -3px; }
.g-tight2 { margin-right: -7px; }
.g-next { margin-right: -4px; }
.grip2 { width: 6px; height: 82%; flex: none; margin: 0 -4px 0 -2px; border-left: 1px solid #a6a6a6; border-right: 1px solid #a6a6a6; }

.dd, .dd0 { display: block; width: 0; height: 0; flex: none; border: 3px solid transparent; border-top: 3px solid #111; border-bottom: 0; }
.dd { margin-left: 4px; }
.d4 { margin-left: 3px; }
.d3 { margin-left: 2px; }
.dd.dx { margin-left: -6px; }
.ddcell { margin-left: auto; height: 100%; width: 11px; display: flex; align-items: center; justify-content: center; background: #f6f6f6; font-weight: 400; }

.pick { height: 21px; width: 59px; flex: none; padding-left: 3px; display: flex; align-items: center; background: #fff; border-right: 1px solid #fff; }

.combos { display: flex; gap: 4px; height: 21px; }
.combo { width: 68px; height: 21px; flex: none; padding-left: 2px; display: flex; align-items: center; background: #fff; border-right: 1px solid #fff; }
.c-first { width: 56px; }
.c-blank { width: 53px; }

.btn { height: calc(100% - 2px); border: 1px solid #c8c8c8; background: repeating-conic-gradient(#fff 0 25%, #ededed 0 50%) 0 0/2px 2px; }
.b-attr { width: 50px; padding-left: 4px; }
.b-list { width: 74px; padding-left: 5px; }
.b-sel { width: 51px; padding-left: 7px; }
.b-lay { width: 76px; padding-left: 4px; }

/* canvas */
.canvas { flex: 1; min-height: 0; margin: 0 3px 0 2px; background: #000; overflow: hidden; }
.draw { display: block; }
.gr line { stroke: #00ff00; stroke-width: 1.300; }
.gr-thin * { stroke: #00ff00; stroke-width: 1; fill: none; }
.gr-dark * { stroke: #008a00; stroke-width: 1; fill: none; }
.gy-line { stroke: #999; stroke-width: 1; }
.cross { stroke: #fff; stroke-width: 1.500; }
.khaki { fill: none; stroke: #8f8f50; stroke-width: 1; }
.cyan { stroke: #00e8f0; stroke-width: 1; stroke-dasharray: 7 2; }
.mag { fill: none; stroke: #f080f0; stroke-width: 1; stroke-dasharray: 12 4; }
.red { fill: none; stroke: #f01010; stroke-width: 1.300; }
.gtri { fill: #c0c0c0; }
.gr-short { stroke: #00ff00; stroke-width: 1.300; }
.gdot { fill: #00ff00; }
.gr1 { stroke: #00ff00; stroke-width: 1; }
.legend { fill: none; stroke: #c0c0c0; stroke-width: 1; }
.lbl { fill: #d8d8d8; font-family: "Noto Sans", sans-serif; }
.tag { fill: #00dc9c; font-family: "Noto Sans", sans-serif; }
.head { fill: #f4f4f4; font-family: "Noto Sans", "Noto Sans CJK SC", sans-serif; }
.note { fill: #d0d0d0; font-family: "Noto Sans", "Noto Sans CJK SC", sans-serif; }

/* property panel */
.panel { flex: 1; margin-top: 30px; background: #fff; border-left: 2px solid #a9a9a9; position: relative; }
.phead {
  height: 14px; margin-left: -2px; padding: 1px 6px 0 1px; display: flex; align-items: center; justify-content: space-between;
  background: #0a5ce0; color: #fff;
}
.ptitle { font-size: 12.500px; letter-spacing: .1px; }
.pctl { display: flex; align-items: center; gap: 12px; }
.pin { display: block; position: relative; width: 6px; height: 6px; margin-top: -2px; border: 1px solid #fff; border-right-width: 2px; }
.pin::before { content: ""; position: absolute; left: -3px; top: 4px; width: 10px; height: 1px; background: #fff; }
.pin::after { content: ""; position: absolute; left: 1px; top: 5px; width: 1px; height: 4px; background: #fff; }
.px { font: 15px/12px "Liberation Sans", sans-serif; }

.props { margin: 4px 0 0 -1px; border-collapse: collapse; table-layout: fixed; width: 260px; }
.c1 { width: 21px; } .c2 { width: 121px; } .c3 { width: 86px; } .c4 { width: 32px; }
.props th, .props td { height: 19px; padding: 1px 0 0; border: 1px solid #bdbdbd; font-weight: 400; overflow: hidden; white-space: nowrap; }
.props th { height: 22px; text-align: center; background: linear-gradient(#fff, #ececec); }
.props th.hv { background: linear-gradient(#fbe0ac, #f2c274); color: #64005c; }
.n { text-align: center; background: linear-gradient(#fff, #e8e8e8); font-size: 11.500px; }
.k { padding-left: 19px !important; }
.l { color: #0000f0; }
.v { padding-left: 2px !important; font-size: 11px; color: #111; }
.cj { font-size: 12px; }
.cjs { font-size: 12px; }
.ind { padding-left: 4px !important; }
.k small { font-size: 10px; }
.g { position: relative; color: #808080; }
.exp { position: absolute; left: 3px; top: 3px; width: 12px; height: 12px; border: 2px solid #c4c4c4; background: linear-gradient(90deg, transparent 3px, #222 3px 5px, transparent 5px), linear-gradient(180deg, transparent 3px, #222 3px 5px, transparent 5px), #eee; background-size: 100% 100%; }
.x { text-align: center; }
.cb { display: block; width: 13px; height: 13px; margin: 0 auto; border: 2px solid #a6a6a6; background: linear-gradient(135deg, #ddd, #fff); }
.cur .n { background: #ffd68e; color: #5a0028; }
.cur .k { background: #3399ff; color: #fff; }
.cur .v { background: #ddeeff; }
```
